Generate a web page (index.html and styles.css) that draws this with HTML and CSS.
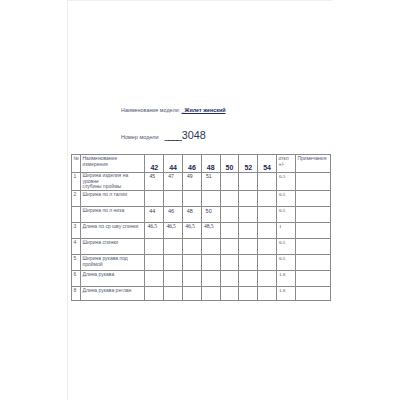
FILE: index.html
```html
<!DOCTYPE html>
<html lang="ru">
<head>
<meta charset="utf-8">
<link rel="stylesheet" href="styles.css">
</head>
<body>
<div class="page">
  <div class="head">
    <div class="line1"><span class="lbl">Наименование модели:</span> <span class="model">_Жилет женский</span></div>
    <div class="line2"><span class="lbl2">Номер модели</span><span class="num"><span class="under">____</span>3048</span></div>
  </div>
  <table class="spec">
    <colgroup>
      <col class="c-n"><col class="c-name">
      <col class="c-s"><col class="c-s"><col class="c-s"><col class="c-s"><col class="c-s"><col class="c-s"><col class="c-s">
      <col class="c-t"><col class="c-note">
    </colgroup>
    <tr class="r-head">
      <td>№</td><td>Наименование<br>измерения</td>
      <td class="sz">42</td><td class="sz">44</td><td class="sz">46</td><td class="sz">48</td><td class="sz">50</td><td class="sz">52</td><td class="sz">54</td>
      <td>откл<br>+/-</td><td>Примечания</td>
    </tr>
    <tr class="r1">
      <td>1</td><td>Ширина изделия на<br>уровне<br>глубины проймы</td>
      <td class="v">45</td><td class="v">47</td><td class="v">49</td><td class="v">51</td><td></td><td></td><td></td>
      <td class="tol">0.5</td><td></td>
    </tr>
    <tr>
      <td>2</td><td>Ширина по л талии</td>
      <td></td><td></td><td></td><td></td><td></td><td></td><td></td>
      <td class="tol">0.5</td><td></td>
    </tr>
    <tr>
      <td></td><td>Ширина по л низа</td>
      <td class="v vb">44</td><td class="v vb">46</td><td class="v vb">48</td><td class="v vb">50</td><td></td><td></td><td></td>
      <td class="tol">0.5</td><td></td>
    </tr>
    <tr>
      <td>3</td><td>Длина по ср шву спинки</td>
      <td class="v vs">46,5</td><td class="v vs">46,5</td><td class="v vs">46,5</td><td class="v vs">48,5</td><td></td><td></td><td></td>
      <td class="tol">1</td><td></td>
    </tr>
    <tr>
      <td>4</td><td>Ширина спинки</td>
      <td></td><td></td><td></td><td></td><td></td><td></td><td></td>
      <td class="tol">0.5</td><td></td>
    </tr>
    <tr>
      <td>5</td><td>Ширина рукава под<br>проймой</td>
      <td></td><td></td><td></td><td></td><td></td><td></td><td></td>
      <td class="tol">0.5</td><td></td>
    </tr>
    <tr>
      <td>6</td><td>Длина рукава</td>
      <td></td><td></td><td></td><td></td><td></td><td></td><td></td>
      <td class="tol">1.0</td><td></td>
    </tr>
    <tr class="r-last">
      <td>8</td><td>Длина рукава реглан</td>
      <td></td><td></td><td></td><td></td><td></td><td></td><td></td>
      <td class="tol">1.0</td><td></td>
    </tr>
  </table>
</div>
</body>
</html>
```
FILE: styles.css
```css
html, body {
  margin: 0;
  padding: 0;
  background: #ffffff;
}
body {
  width: 400px;
  height: 400px;
  overflow: hidden;
  font-family: "Liberation Sans", Arial, sans-serif;
}
.page {
  margin-left: 67px;
  width: 265px;
  height: 400px;
  box-sizing: border-box;
  border-left: 1px solid #ededed;
  border-top: 1px solid #f0f0f0;
  padding-top: 106px;
}
.head {
  padding-left: 53px;
  color: #4d5570;
}
.line1 {
  font-size: 5.4px;
  line-height: 7px;
  white-space: nowrap;
}
.model {
  font-weight: bold;
  color: #1c2a5c;
  text-decoration: underline;
}
.line2 {
  margin-top: 15px;
  display: flex;
  align-items: baseline;
  white-space: nowrap;
}
.lbl2 {
  font-size: 5.5px;
}
.num {
  font-size: 10.8px;
  line-height: 12px;
  color: #2e3652;
  margin-left: 6px;
}
.under {
  letter-spacing: -2.2px;
  margin-right: 2px;
}
.spec {
  margin-top: 13px;
  margin-left: 3px;
  border-collapse: collapse;
  table-layout: fixed;
  width: 259px;
  border: 1px solid #6f6f6f;
  color: #555c74;
  font-size: 5px;
  line-height: 5.8px;
}
.c-n { width: 9px; }
.c-name { width: 64.4px; }
.c-s { width: 18.8px; }
.c-t { width: 19px; }
.c-note { width: 34.7px; }
.spec td {
  border: 1px solid #8a8a8a;
  vertical-align: top;
  padding: 1px 0 0 1.5px;
  height: 16px;
  box-sizing: border-box;
  overflow: visible;
  white-space: nowrap;
}
.spec tr.r-head td {
  height: 17.6px;
}
.spec tr.r1 td {
  height: 17.4px;
}
.spec tr.r1 td:nth-child(2) {
  line-height: 5.6px;
  padding-top: 0.5px;
}
.spec tr.r-last td {
  height: 14.6px;
}
.spec td.sz {
  vertical-align: bottom;
  text-align: center;
  font-weight: bold;
  font-size: 7px;
  line-height: 7px;
  color: #1c2850;
  padding: 0 0 0.5px 0;
}
.spec td.v {
  text-align: center;
  font-size: 5px;
  color: #3a4060;
  padding: 1.5px 4px 0 0;
}
.spec td.vb {
  font-size: 5.5px;
  padding-top: 2px;
}
.spec td.vs {
  font-family: "Liberation Serif", "Times New Roman", serif;
  font-size: 5.6px;
  letter-spacing: -0.1px;
}
.spec td.tol {
  font-family: "Liberation Serif", "Times New Roman", serif;
  font-size: 5px;
  color: #3a4060;
  padding-left: 2px;
  padding-top: 1.5px;
}
```
